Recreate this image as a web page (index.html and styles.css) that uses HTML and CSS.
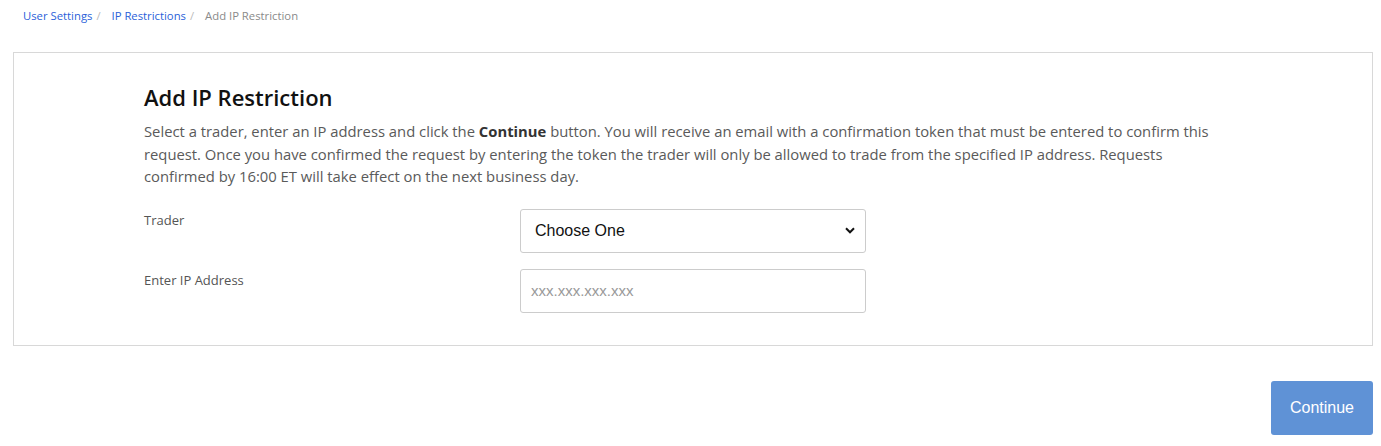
FILE: index.html
```html
<!DOCTYPE html>
<html>
<head>
<meta charset="utf-8">
<link rel="stylesheet" href="styles.css">
</head>
<body>
<nav class="breadcrumb">
  <a href="#" class="crumb-link">User Settings</a><span class="sep">/</span>
  <a href="#" class="crumb-link">IP Restrictions</a><span class="sep">/</span>
  <span class="crumb-current">Add IP Restriction</span>
</nav>
<section class="card">
  <div class="card-inner">
    <h1 class="title">Add IP Restriction</h1>
    <p class="intro">Select a trader, enter an IP address and click the <b>Continue</b> button. You will receive an email with a confirmation token that must be entered to confirm this request. Once you have confirmed the request by entering the token the trader will only be allowed to trade from the specified IP address. Requests confirmed by 16:00 ET will take effect on the next business day.</p>
    <div class="form-row">
      <label class="label">Trader</label>
      <div class="field select-field">
        <span class="select-text">Choose One</span>
        <svg class="chev" width="10" height="7" viewBox="0 0 10 7"><path d="M1 1.3 L5 5.3 L9 1.3" fill="none" stroke="#111" stroke-width="2"/></svg>
      </div>
    </div>
    <div class="form-row">
      <label class="label">Enter IP Address</label>
      <div class="field input-field"><span class="placeholder">xxx.xxx.xxx.xxx</span></div>
    </div>
  </div>
</section>
<div class="actions">
  <button class="btn">Continue</button>
</div>
</body>
</html>
```

FILE: styles.css
```css
html, body { margin: 0; padding: 0; background: #fff; }
body { font-family: "Open Sans", Lato, sans-serif; color: #555; }
.breadcrumb { padding: 8px 0 0 23px; height: 52px; box-sizing: border-box; font-size: 11.3px; }
.crumb-link { color: #2b5fd9; text-decoration: none; }
.sep { color: #bbb; padding: 0 8px 0 4px; }
.crumb-current { color: #8a8a8a; }
.card { margin: 0 8px 0 13px; border: 1px solid #d8d8d8; height: 294px; box-sizing: border-box; }
.card-inner { padding: 29px 0 0 130px; width: 1090px; }
.title { margin: 0; font-size: 22px; font-weight: 600; color: #111; line-height: 30px; }
.intro { margin: 8px 0 0; font-size: 14.8px; line-height: 22.5px; color: #5a5a5a; }
.intro b { color: #333; font-weight: 700; }
.form-row { display: grid; grid-template-columns: 376px 346px; margin-top: 21px; }
.form-row + .form-row { margin-top: 16px; }
.label { font-size: 13px; color: #555; padding-top: 2px; }
.field { height: 44px; box-sizing: border-box; border: 1px solid #ccc; border-radius: 3px; display: flex; align-items: center; font-family: "Liberation Sans", Arial, sans-serif; }
.select-field { justify-content: space-between; padding: 0 10px 0 14px; font-size: 16px; color: #111; }
.input-field { padding: 0 10px; font-size: 15px; }
.placeholder { color: #999; }
.actions { display: flex; justify-content: flex-end; padding: 35px 8px 0 0; }
.btn { width: 102px; height: 54px; border: none; border-radius: 3px; background: #5f92d6; color: #fff; font-family: "Liberation Sans", Arial, sans-serif; font-size: 16px; }
```
